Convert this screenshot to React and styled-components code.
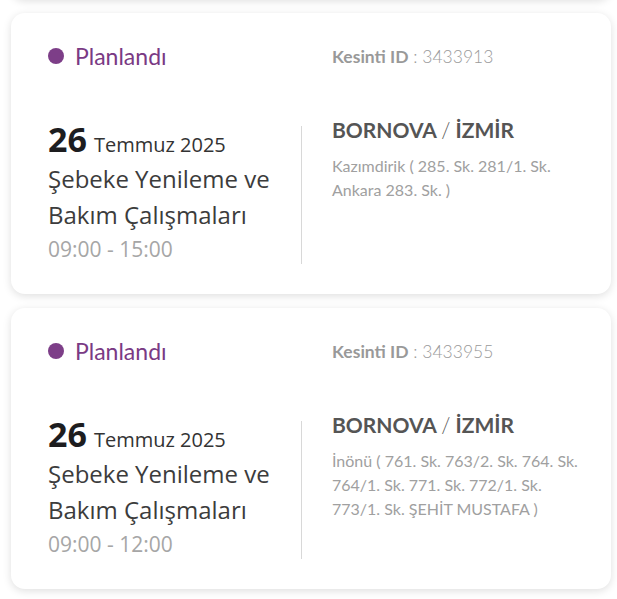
import React from 'react';
import styled, { createGlobalStyle } from 'styled-components';

const GlobalStyle = createGlobalStyle`
  html, body {
    margin: 0;
    padding: 0;
    background: #ffffff;
  }
  body {
    overflow: hidden;
  }
`;

const List = styled.div`
  display: flex;
  flex-direction: column;
  gap: 14px;
  padding: 13px 6px 20px 11px;
`;

const Card = styled.div`
  background: #fff;
  border-radius: 14px;
  box-shadow: 0 2px 9px rgba(0, 0, 0, 0.13);
  padding: 0 16px 29px 37px;
`;

const PrevCard = styled(Card)`
  height: 40px;
  padding: 0;
  margin-top: -54px;
`;

const Header = styled.div`
  display: flex;
  align-items: center;
  height: 26px;
  margin-top: 30px;
`;

const Status = styled.div`
  width: 284px;
  display: flex;
  align-items: center;
  gap: 11px;
  font-family: 'Lato', sans-serif;
  font-size: 23px;
  color: #7a3a84;
`;

const Dot = styled.span`
  width: 16px;
  height: 16px;
  border-radius: 50%;
  background: #7d3e88;
`;

const OutageId = styled.div`
  font-family: 'Lato', sans-serif;
  font-size: 17.5px;
  color: #9a9a9a;
  font-weight: 300;

  b {
    font-weight: 700;
    color: #999;
  }
`;

const Body = styled.div`
  display: flex;
  margin-top: 47px;
`;

const Left = styled.div`
  width: 253px;
  padding-top: 3px;
  font-family: 'Open Sans', sans-serif;
`;

const DateLine = styled.div`
  height: 40px;
  display: flex;
  align-items: baseline;
  gap: 7px;
  line-height: 40px;
`;

const Day = styled.span`
  font-size: 34px;
  font-weight: 700;
  color: #1d1d1f;
`;

const Month = styled.span`
  font-size: 20px;
  color: #333;
`;

const Title = styled.div`
  font-size: 24px;
  line-height: 36px;
  margin-top: 2px;
  color: #3c3c3c;
`;

const Time = styled.div`
  font-size: 21px;
  line-height: 32px;
  color: #a6a6a6;
`;

const Divider = styled.div`
  width: 1px;
  background: #d8d8d8;
  margin: 10px 0 1px;
`;

const Right = styled.div`
  flex: 1;
  padding-left: 30px;
  font-family: 'Lato', sans-serif;
`;

const Place = styled.div`
  font-size: 21px;
  line-height: 28px;
  font-weight: 700;
  color: #555;

  span {
    font-weight: 300;
  }
`;

const Address = styled.div`
  margin-top: 10px;
  font-size: 16px;
  line-height: 24px;
  color: #a0a0a0;
  max-width: 258px;
`;

const outages = [
  {
    id: '3433913',
    time: '09:00 - 15:00',
    address: 'Kazımdirik ( 285. Sk. 281/1. Sk. Ankara 283. Sk. )',
  },
  {
    id: '3433955',
    time: '09:00 - 12:00',
    address: 'İnönü ( 761. Sk. 763/2. Sk. 764. Sk. 764/1. Sk. 771. Sk. 772/1. Sk. 773/1. Sk. ŞEHİT MUSTAFA )',
  },
];

function OutageCard({ item }) {
  return (
    <Card>
      <Header>
        <Status>
          <Dot />
          Planlandı
        </Status>
        <OutageId>
          <b>Kesinti ID</b> : {item.id}
        </OutageId>
      </Header>
      <Body>
        <Left>
          <DateLine>
            <Day>26</Day>
            <Month>Temmuz 2025</Month>
          </DateLine>
          <Title>Şebeke Yenileme ve Bakım Çalışmaları</Title>
          <Time>{item.time}</Time>
        </Left>
        <Divider />
        <Right>
          <Place>
            BORNOVA <span>/</span> İZMİR
          </Place>
          <Address>{item.address}</Address>
        </Right>
      </Body>
    </Card>
  );
}

export default function App() {
  return (
    <>
      <GlobalStyle />
      <List>
        <PrevCard />
        {outages.map((o) => (
          <OutageCard key={o.id} item={o} />
        ))}
      </List>
    </>
  );
}
